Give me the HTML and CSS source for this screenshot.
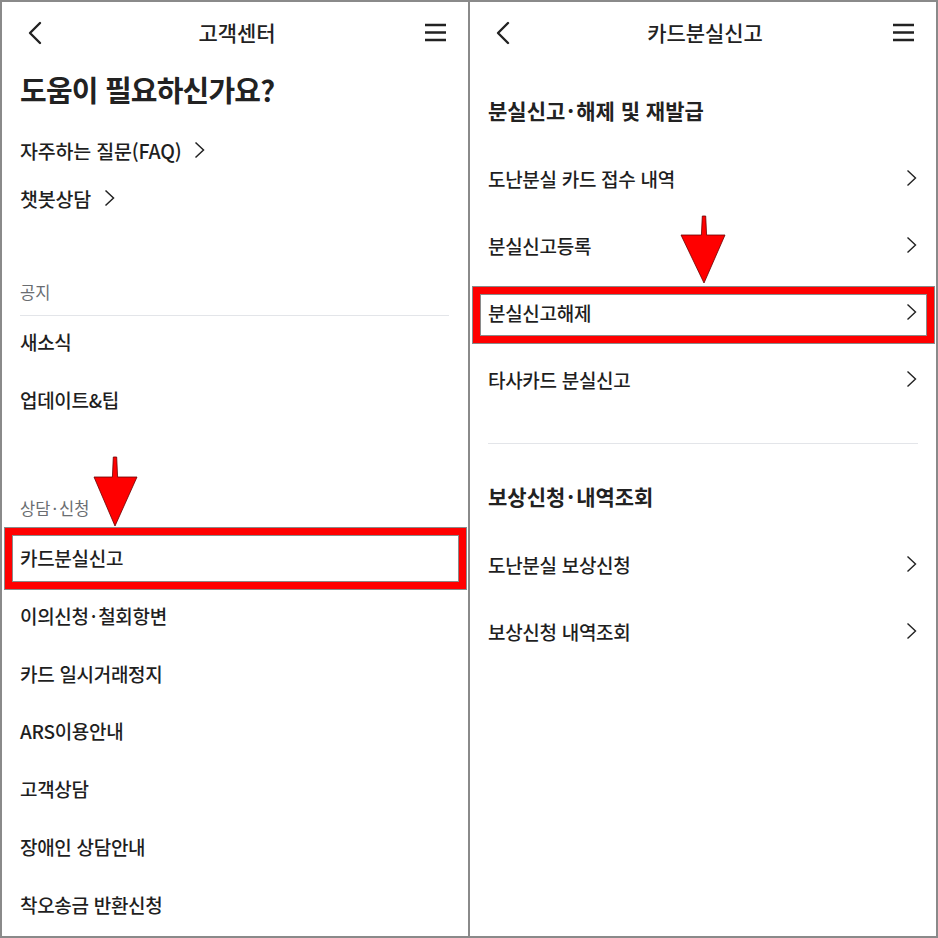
FILE: index.html
```html
<!DOCTYPE html>
<html lang="ko">
<head>
    <meta charset="UTF-8">
    <meta name="viewport" content="width=device-width, initial-scale=1.0">
    <title>고객센터 - 카드분실신고</title>
    <link rel="stylesheet" href="styles.css">
</head>
<body>
<div class="frame">

    <!-- 왼쪽 화면: 고객센터 -->
    <section class="screen">
        <header class="topbar">
            <span class="icon back">
                <svg width="16" height="24" viewBox="0 0 16 24"><path d="M13 2 L3 12 L13 22" fill="none" stroke="#222" stroke-width="2.4" stroke-linecap="round" stroke-linejoin="round"/></svg>
            </span>
            <h1 class="title">고객센터</h1>
            <span class="icon menu">
                <svg width="23" height="20" viewBox="0 0 23 20"><path d="M1 3 H22 M1 10.5 H22 M1 18 H22" stroke="#222" stroke-width="2.4"/></svg>
            </span>
        </header>

        <h2 class="hero">도움이 필요하신가요?</h2>

        <ul class="quick">
            <li>자주하는 질문(FAQ)<svg class="chev" width="11" height="18" viewBox="0 0 11 18"><path d="M1.5 1.5 L9.5 9 L1.5 16.5" fill="none" stroke="#222" stroke-width="1.5"/></svg></li>
            <li>챗봇상담<svg class="chev" width="11" height="18" viewBox="0 0 11 18"><path d="M1.5 1.5 L9.5 9 L1.5 16.5" fill="none" stroke="#222" stroke-width="1.5"/></svg></li>
        </ul>

        <div class="group first">
            <p class="group-label">공지</p>
            <ul class="menu">
                <li>새소식</li>
                <li>업데이트&amp;팁</li>
            </ul>
        </div>

        <div class="group second">
            <p class="group-label">상담<span class="dot">·</span>신청</p>
            <ul class="menu">
                <li class="marked">카드분실신고</li>
                <li>이의신청<span class="dot">·</span>철회항변</li>
                <li>카드 일시거래정지</li>
                <li>ARS이용안내</li>
                <li>고객상담</li>
                <li>장애인 상담안내</li>
                <li>착오송금 반환신청</li>
            </ul>
        </div>

        <svg class="pointer pointer-left" width="48" height="76" viewBox="0 0 48 76">
            <path d="M21.3 3 L24.7 3 L25.6 23 L45 23 L23 72 L2 23 L20.4 23 Z" fill="#ff0000" stroke="#6b0000" stroke-width="0.8"/>
        </svg>
    </section>

    <!-- 오른쪽 화면: 카드분실신고 -->
    <section class="screen">
        <header class="topbar">
            <span class="icon back">
                <svg width="16" height="24" viewBox="0 0 16 24"><path d="M13 2 L3 12 L13 22" fill="none" stroke="#222" stroke-width="2.4" stroke-linecap="round" stroke-linejoin="round"/></svg>
            </span>
            <h1 class="title">카드분실신고</h1>
            <span class="icon menu">
                <svg width="23" height="20" viewBox="0 0 23 20"><path d="M1 3 H22 M1 10.5 H22 M1 18 H22" stroke="#222" stroke-width="2.4"/></svg>
            </span>
        </header>

        <h2 class="section-title">분실신고<span class="dot">·</span>해제 및 재발급</h2>
        <ul class="links">
            <li>도난분실 카드 접수 내역<svg width="11" height="18" viewBox="0 0 11 18"><path d="M1.5 1.5 L9.5 9 L1.5 16.5" fill="none" stroke="#222" stroke-width="1.4"/></svg></li>
            <li>분실신고등록<svg width="11" height="18" viewBox="0 0 11 18"><path d="M1.5 1.5 L9.5 9 L1.5 16.5" fill="none" stroke="#222" stroke-width="1.4"/></svg></li>
            <li class="marked">분실신고해제<svg width="11" height="18" viewBox="0 0 11 18"><path d="M1.5 1.5 L9.5 9 L1.5 16.5" fill="none" stroke="#222" stroke-width="1.4"/></svg></li>
            <li>타사카드 분실신고<svg width="11" height="18" viewBox="0 0 11 18"><path d="M1.5 1.5 L9.5 9 L1.5 16.5" fill="none" stroke="#222" stroke-width="1.4"/></svg></li>
        </ul>

        <hr class="divider">

        <h2 class="section-title second">보상신청<span class="dot">·</span>내역조회</h2>
        <ul class="links">
            <li>도난분실 보상신청<svg width="11" height="18" viewBox="0 0 11 18"><path d="M1.5 1.5 L9.5 9 L1.5 16.5" fill="none" stroke="#222" stroke-width="1.4"/></svg></li>
            <li>보상신청 내역조회<svg width="11" height="18" viewBox="0 0 11 18"><path d="M1.5 1.5 L9.5 9 L1.5 16.5" fill="none" stroke="#222" stroke-width="1.4"/></svg></li>
        </ul>

        <svg class="pointer pointer-right" width="50" height="76" viewBox="0 0 50 76">
            <path d="M24.3 3 L27.7 3 L28.6 22 L47 22 L26 70 L3 22 L23.4 22 Z" fill="#ff0000" stroke="#6b0000" stroke-width="0.8"/>
        </svg>
    </section>

</div>
</body>
</html>
```

FILE: styles.css
```css
html, body {
    margin: 0;
    padding: 0;
    background: #fff;
}

body {
    font-family: "Noto Sans CJK KR", "Noto Sans", sans-serif;
    color: #1f1f1f;
}

ul {
    list-style: none;
    margin: 0;
    padding: 0;
}

.frame {
    width: 938px;
    height: 938px;
    box-sizing: border-box;
    border: 2px solid #8a8a8a;
    display: flex;
    overflow: hidden;
}

.screen {
    position: relative;
    width: 466px;
    flex: none;
    overflow: hidden;
    background: #fff;
}

.screen:first-child {
    border-right: 2px solid #8a8a8a;
}

.dot {
    margin: 0 2px;
}

/* 상단 바 */
.topbar {
    height: 62px;
    display: grid;
    grid-template-columns: 1fr auto 1fr;
    align-items: center;
    padding: 0 21px 0 25px;
}

.icon {
    display: flex;
    align-items: center;
}

.icon.menu {
    justify-content: flex-end;
}

.title {
    margin: 0 0 2px;
    font-size: 21px;
    font-weight: 500;
    letter-spacing: -0.1px;
    color: #222;
}

/* 왼쪽 화면 */
.hero {
    margin: 7px 0 0;
    padding-left: 18px;
    font-size: 29px;
    line-height: 36px;
    font-weight: 700;
    letter-spacing: -0.8px;
    color: #222;
}

.quick {
    margin-top: 19px;
    padding-left: 18px;
}

.quick li {
    display: flex;
    align-items: center;
    height: 48px;
    font-size: 19.5px;
    font-weight: 500;
    letter-spacing: -0.2px;
}

.quick .chev {
    margin-left: 13px;
}

.group.first {
    margin-top: 50px;
}

.group.second {
    margin-top: 60px;
}

.group-label {
    margin: 0 19px 0 18px;
    padding-bottom: 3px;
    line-height: 40px;
    font-size: 16.5px;
    color: #6a6d71;
    border-bottom: 1px solid #e3e5e9;
}

.menu {
    margin-top: -3px;
}

.menu li {
    position: relative;
    height: 57.7px;
    line-height: 57.7px;
    padding-left: 18px;
    font-size: 19px;
    font-weight: 500;
    letter-spacing: -0.3px;
}

/* 오른쪽 화면 */
.section-title {
    margin: 21px 0 10px;
    padding-left: 18px;
    font-size: 21px;
    line-height: 50px;
    font-weight: 700;
    letter-spacing: 0;
    color: #222;
}

.section-title.second {
    margin-top: 27px;
}

.links li {
    position: relative;
    display: flex;
    align-items: center;
    justify-content: space-between;
    height: 67px;
    padding: 0 19px 0 18px;
    font-size: 19px;
    font-weight: 500;
    letter-spacing: -0.3px;
}

.links li svg {
    margin-top: -2px;
}

.divider {
    margin: 30px 18px 0;
    border: 0;
    border-top: 1px solid #e3e5e9;
    height: 0;
}

/* 강조 표시 */
.menu li.marked::after,
.links li.marked::after {
    content: "";
    position: absolute;
    border: 7px solid #ff0000;
    box-shadow: 0 0 0 1px #8a8a8a, inset 0 0 0 1px #8a8a8a;
}

.menu li.marked::after {
    left: 3px;
    right: 2px;
    top: -1px;
    bottom: -2px;
}

.links li.marked::after {
    left: 3px;
    right: 2px;
    top: 8px;
    bottom: 3px;
}

.pointer {
    position: absolute;
}

.pointer-left {
    left: 90px;
    top: 452px;
}

.pointer-right {
    left: 208px;
    top: 211px;
}
```
